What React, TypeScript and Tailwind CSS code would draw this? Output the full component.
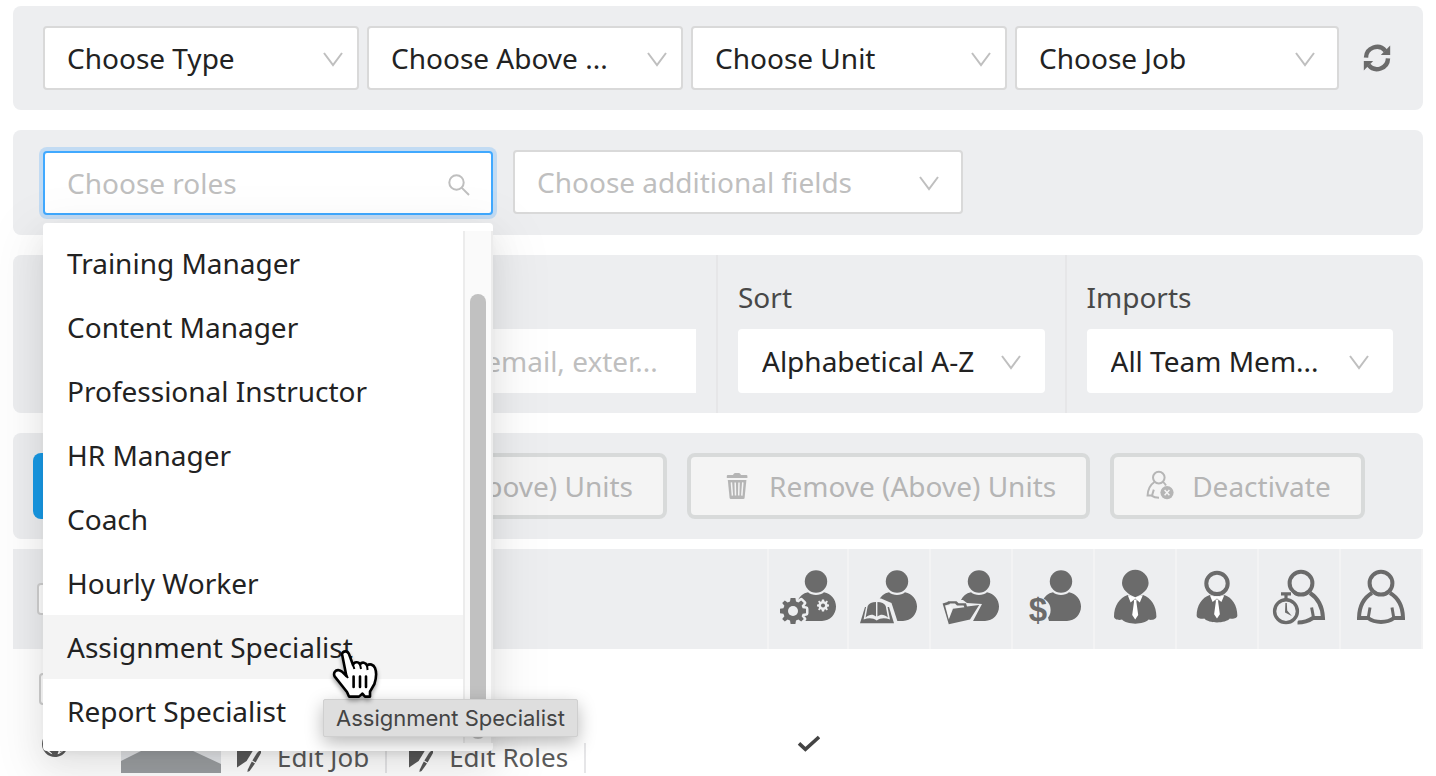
import type { ReactNode } from "react";

const roles = [
  "Training Manager",
  "Content Manager",
  "Professional Instructor",
  "HR Manager",
  "Coach",
  "Hourly Worker",
  "Assignment Specialist",
  "Report Specialist",
];

type SelectProps = {
  label: string;
  value: string;
  id?: string;
  className?: string;
  chevron?: string;
};

const Select = ({
  label,
  value,
  id,
  className = "border-[#d9d9d9] text-[#222]",
  chevron = "right-6",
}: SelectProps) => (
  <div className="relative w-full">
    <select
      id={id}
      aria-label={label}
      className={`block h-16 w-full appearance-none rounded border-2 bg-white pr-12 pl-[22px] ${className}`}
    >
      <option>{value}</option>
    </select>
    <svg
      className={`pointer-events-none absolute top-[25px] h-4 w-5 ${chevron}`}
      viewBox="0 0 20 16"
      fill="none"
      stroke="#bfbfbf"
      strokeWidth="2"
    >
      <path d="M1 2 L10 14 L19 2" />
    </svg>
  </div>
);

/* Icons */

const BG = "#edeef0";
const gearPath =
  "M-2.4 -13 H2.4 L3 -9.4 L5.4 -8.4 L8.2 -10.6 L10.8 -8 L8.6 -5.2 L9.6 -2.8 L13 -2.3 V2.3 L9.6 2.8 L8.6 5.2 L10.8 8 L8.2 10.6 L5.4 8.4 L3 9.4 L2.4 13 H-2.4 L-3 9.4 L-5.4 8.4 L-8.2 10.6 L-10.8 8 L-8.6 5.2 L-9.6 2.8 L-13 2.3 V-2.3 L-9.6 -2.8 L-8.6 -5.2 L-10.8 -8 L-8.2 -10.6 L-5.4 -8.4 L-3 -9.4 Z";

const Icon = ({ children }: { children: ReactNode }) => (
  <svg className="mx-auto block size-[60px]" viewBox="0 0 60 60" fill="#6b6b6b">
    {children}
  </svg>
);

const Bust = () => (
  <>
    <circle cx="38" cy="12.5" r="11.2" />
    <path d="M30 23.3 C34 27 42 27 46 23.3 C53 24.5 58 30.5 58 37.6 C58 45.5 52 52 44 52 H26 L20 31 C22 27 25 24.3 30 23.3 Z" />
  </>
);

const GearsIcon = () => (
  <Icon>
    <Bust />
    <g transform="translate(15 42)">
      <path d={gearPath} stroke={BG} strokeWidth="5" strokeLinejoin="round" fill={BG} />
      <path d={gearPath} />
      <circle r="5" fill={BG} />
    </g>
    <g transform="translate(45 36.5) scale(.46)">
      <path d={gearPath} fill={BG} />
      <circle r="4.4" />
    </g>
  </Icon>
);

const BookIcon = () => (
  <Icon>
    <Bust />
    <path d="M14 29.5 L22 29.5 L32.5 34 L39 54 H24 Z" fill={BG} />
    <path d="M6 38 L1 54.3 H35 L30 38 Z" />
    <path d="M8 33 L4.6 50.6 C9.5 48.4 14 48.8 17.7 51.4 C21.4 48.8 26 48.4 31 50.6 L27.6 33 Z" fill={BG} />
    <path d="M17 33 C13 33 10 34.4 8.7 37 L6.6 48.4 C10.5 45.2 13.6 45 17 47.4 Z" />
    <path d="M18.4 33 C22.4 33 25.4 34.4 26.7 37 L28.9 48.4 C25 45.2 21.9 45 18.4 47.4 Z" />
  </Icon>
);

const FolderIcon = () => (
  <Icon>
    <Bust />
    <path d="M2 31 L22 31 L26 34 L41 35 L31 54 H8 Z" fill={BG} />
    <path d="M1.6 34.4 L6.4 33 L7 32.2 H15.5 L17.6 34.2 L25 34.2 L26 37.6 L38.2 36 L29 50.6 L7.8 55.2 Z" />
    <path d="M4 36.4 L8.4 35.2 L9 34.6 H14 L16 36.6 L22.6 36.6 L23.4 38.2 L12 39.8 L7.8 50.6 Z" fill={BG} />
    <path d="M5 37.4 L9.5 36.4 L11 39.8 L7.8 49 Z" fill="#f7f7f7" />
  </Icon>
);

const DollarIcon = () => (
  <Icon>
    <Bust />
    <circle cx="15" cy="41" r="12.6" fill={BG} />
    <text
      x="15"
      y="52"
      textAnchor="middle"
      fontFamily="Liberation Sans, sans-serif"
      fontWeight="700"
      fontSize="33"
    >
      $
    </text>
  </Icon>
);

const Suit = () => (
  <>
    <path d="M22.6 26 L30 29 L38 26 C46 28.6 51.4 37 51.4 47.5 C51.4 50.6 46.5 51.4 43.6 50.6 C39 56 21.5 56 17 50.6 C13.5 51.4 9 50.6 9 47.5 C9 37 14.6 28.6 22.6 26 Z" />
    <path d="M22.8 26.2 L25.6 33.4 L30.2 29.6 L34.8 33.4 L37.8 26.2 L30.2 28 Z" fill="#fff" />
    <path d="M28.8 30.6 H31.6 L31.4 33 L33.2 46 L30.2 50.6 L27.2 46 L29 33 Z" fill="#fff" />
  </>
);

const SuitIcon = () => (
  <Icon>
    <Suit />
    <path d="M30.3 .8 A13.3 13.3 0 0 1 43.6 14 C43.6 20 38 25.5 30.3 28.2 C22.6 25.5 17 20 17 14 A13.3 13.3 0 0 1 30.3 .8 Z" />
  </Icon>
);

const SuitOutlineIcon = () => (
  <Icon>
    <g transform="translate(1 1) scale(.96)">
      <Suit />
    </g>
    <circle cx="30" cy="14.4" r="10.7" fill={BG} stroke="#6b6b6b" strokeWidth="4" />
  </Icon>
);

const StopwatchIcon = () => (
  <Icon>
    <g fill="none" stroke="#6b6b6b" strokeWidth="4">
      <circle cx="32" cy="14.2" r="11.4" />
      <path d="M41 24 C49.5 29.5 53.5 38 54 49 H44 C38 53 34 53.5 28.5 53.6" />
      <path d="M42.6 38.5 L44.6 49" strokeWidth="3" />
    </g>
    <circle cx="17" cy="42" r="15.4" fill={BG} />
    <path d="M10 21.5 H21 L25 26 L23 31 H10 Z" fill={BG} />
    <circle cx="17" cy="42.2" r="11.4" fill={BG} stroke="#6b6b6b" strokeWidth="3.4" />
    <path d="M12 23.2 H22 V26.6 H18.6 V30 H15.4 V26.6 H12 Z" />
    <path d="M16.4 34 H17.8 L18.2 41.6 L22.8 47 L16 43.4 Z" />
  </Icon>
);

const PersonIcon = () => (
  <Icon>
    <g fill="none" stroke="#6b6b6b" strokeWidth="4">
      <circle cx="30" cy="14.2" r="11.4" />
      <path d="M21 24 C12.5 29 8.2 37 8 49 H17 C24 54.2 36 54.2 43 49 H52 C51.8 37 47.5 29 39 24" />
      <path d="M19 38.5 L17.2 49 M41 38.5 L42.8 49" strokeWidth="3" />
    </g>
  </Icon>
);

const TrashIcon = () => (
  <svg className="h-8 w-8" viewBox="0 0 32 32" fill="#b5b5b5">
    <path d="M12.6 4 Q13 3 14.4 3 H17.6 Q19 3 19.4 4 L20 5 H25.4 Q26.4 5 26.4 6 V8 H5.8 V6 Q5.8 5 6.8 5 H12 Z" />
    <path d="M6.8 10 H25.4 L23.6 28 Q23.4 29 22.4 29 H9.8 Q8.8 29 8.6 28 Z" />
    <path d="M10.4 12.4 L11.4 25.6 M14.2 12.4 L14.5 25.6 M18 12.4 L17.7 25.6 M21.8 12.4 L20.8 25.6" stroke="#f4f4f4" strokeWidth="1.5" />
  </svg>
);

const UserRemoveIcon = () => (
  <svg className="h-8 w-8" viewBox="0 0 32 32" fill="none" stroke="#b5b5b5" strokeWidth="2">
    <circle cx="14.8" cy="7.6" r="5.8" />
    <path d="M10.4 12 C6 15 3.8 19.4 3.6 25.6 H7.6 C9.6 27.2 12 27.8 15 27.8 M19 12 C20.4 13 21.2 14 22 15.4 M9.8 19.6 L8.2 25" />
    <circle cx="23" cy="22.6" r="6.6" fill="#b5b5b5" stroke="none" />
    <path d="M20.6 20 L25.4 25.2 M25.4 20 L20.6 25.2" stroke="#f4f4f4" strokeWidth="1.5" />
  </svg>
);

const EditIcon = () => (
  <svg className="h-7 w-6" viewBox="0 0 24 28" fill="#5a5a5a">
    <path d="M0 3 H18 L14.5 9 L9.6 17 L0 23.4 Z" />
    <path d="M24 5 L20 9 L15.4 16.4 L18.6 18.4 L24 9 Z" />
    <path d="M14.8 17.4 L18 19.4 L12.6 27 L10.4 28 L10.8 25.4 Z" />
  </svg>
);

const PointerIcon = () => (
  <svg className="h-[52px] w-[48px] drop-shadow-[0_3px_2px_rgba(0,0,0,0.35)]" viewBox="0 0 48 52">
    <path
      d="M10 5 C11 1.6 15.4 1.4 17 5 L21 16 C22 12.6 26.6 12.4 28 15.4 C30 12.6 34 13.4 35 16.6 C37.6 14.4 41.6 15.4 43 19 C45 24 44 30 42.4 35 L38 42.6 V47.6 H33 L30.4 44.6 L27 47.6 H17 L15 43 L2.6 27.4 C1 24 3.4 20.6 7 21.2 C10 21.8 12 24.4 14.4 27 Z"
      fill="#fff"
      stroke="#000"
      strokeWidth="2.6"
      strokeLinejoin="round"
    />
    <path d="M14 26 L16 29 M21 16 L22.4 20 M28 15.4 L29 20 M35 16.6 L35.6 21" stroke="#000" strokeWidth="2" />
    <path d="M21.6 27.6 V38 M28 27.6 V38 M34 27.6 V38" stroke="#000" strokeWidth="2.6" strokeLinecap="round" />
  </svg>
);

const columns = [
  { name: "Administrator", icon: <GearsIcon /> },
  { name: "Training Manager", icon: <BookIcon /> },
  { name: "Content Manager", icon: <FolderIcon /> },
  { name: "HR Manager", icon: <DollarIcon /> },
  { name: "Coach", icon: <SuitIcon /> },
  { name: "Assistant", icon: <SuitOutlineIcon /> },
  { name: "Hourly Worker", icon: <StopwatchIcon /> },
  { name: "Member", icon: <PersonIcon /> },
];

const RolesDropdown = () => (
  <div className="absolute top-[72px] left-0 z-10 w-full rounded bg-white py-2 shadow-[0_18px_56px_16px_rgba(0,0,0,0.05),0_12px_32px_0_rgba(0,0,0,0.08),0_6px_12px_-8px_rgba(0,0,0,0.12)]">
    <div className="flex">
      <ul role="listbox" aria-label="Roles" className="flex-1">
        {roles.map((role) => (
          <li
            key={role}
            role="option"
            aria-selected={false}
            className={`h-16 px-6 leading-[64px] whitespace-nowrap text-[#222] ${
              role === "Assignment Specialist" ? "bg-[#f4f4f4]" : ""
            }`}
          >
            {role}
          </li>
        ))}
      </ul>
      {/* Scrollbar */}
      <div className="flex w-[30px] justify-center border-x-2 border-[#ececec] bg-[#fafafa] pt-[63px] pb-1">
        <div className="w-4 rounded-full bg-[#c1c1c1]" />
      </div>
    </div>

    <div className="absolute top-[476px] left-[280px] rounded-xs border border-[#cfcfcf] bg-[#dedede] px-3 font-[Inter,sans-serif] text-[22px] leading-9 whitespace-nowrap text-[#444] shadow-[0_6px_18px_rgba(0,0,0,0.28)]">
      Assignment Specialist
    </div>
    <div className="absolute top-[426px] left-[289px]">
      <PointerIcon />
    </div>
  </div>
);

const actionClass =
  "flex h-[66px] items-center gap-4 rounded-lg border-4 border-[#d8dada] bg-[#f4f4f4] px-[30px] whitespace-nowrap text-[#b5b5b5]";

const checkboxClass = "block size-8 appearance-none rounded border-2 border-[#d0d0d0] bg-white";

const App = () => (
  <div className="h-screen overflow-hidden bg-white px-[13px] pt-1.5 font-['Noto_Sans',sans-serif] text-[28px] leading-9 text-[#484848]">
    {/* Filters */}
    <section className="flex items-center rounded-lg bg-[#edeef0] py-5 pr-8 pl-[30px]">
      <div className="grid flex-1 grid-cols-4">
        <div className="pr-2">
          <Select label="Type" value="Choose Type" chevron="right-4" />
        </div>
        <div className="pr-2">
          <Select label="Above unit" value="Choose Above ..." chevron="right-4" />
        </div>
        <div className="pr-2">
          <Select label="Unit" value="Choose Unit" chevron="right-4" />
        </div>
        <div>
          <Select label="Job" value="Choose Job" />
        </div>
      </div>
      <button aria-label="Refresh" className="ml-6">
        <svg className="size-7" viewBox="0 0 28 28" fill="none" stroke="#6b6b6b" strokeWidth="4.4">
          <path d="M3 13.6 A11 11 0 0 1 22.4 6.8" />
          <path d="M27.2 1.6 V11 H17.8 Z" fill="#6b6b6b" stroke="none" />
          <path d="M25 14.4 A11 11 0 0 1 5.6 21.2" />
          <path d="M.8 26.4 V17 H10.2 Z" fill="#6b6b6b" stroke="none" />
        </svg>
      </button>
    </section>

    {/* Roles and additional fields */}
    <section className="mt-5 flex gap-5 rounded-lg bg-[#edeef0] px-[30px] py-5">
      <div className="relative mt-px w-[450px]">
        <input
          aria-label="Choose roles"
          placeholder="Choose roles"
          className="block h-16 w-full rounded border-2 border-[#40a9ff] bg-white pr-12 pl-[22px] shadow-[0_0_0_4px_rgba(24,144,255,0.2)] outline-none placeholder:text-[#bfbfbf]"
        />
        <svg className="absolute top-[22px] right-[22px] size-6" viewBox="0 0 24 24" fill="none" stroke="#bfbfbf" strokeWidth="2">
          <circle cx="9.5" cy="9.5" r="7.2" />
          <path d="M14.6 14.6 L22 22" />
        </svg>
        <RolesDropdown />
      </div>
      <div className="w-[450px]">
        <Select label="Additional fields" value="Choose additional fields" className="border-[#d9d9d9] text-[#bfbfbf]" />
      </div>
    </section>

    {/* Search and sort */}
    <section className="mt-5 flex rounded-lg bg-[#edeef0] px-2.5">
      <div className="flex-1 px-5 pt-[74px] pb-5">
        <Select label="Status" value="" className="border-white" />
      </div>
      <div className="flex-1 border-r-2 border-[#e6e6e8] px-5 pt-[74px] pb-5">
        <input
          aria-label="Search"
          placeholder="Name, email, exter..."
          className="block h-16 w-full bg-white px-0.5 placeholder:text-[#bfbfbf]"
        />
      </div>
      <div className="flex-1 border-r-2 border-[#e6e6e8] px-5 pt-5 pb-5">
        <label htmlFor="sort" className="mb-2.5 block leading-[44px]">
          Sort
        </label>
        <Select id="sort" label="Sort" value="Alphabetical A-Z" className="border-white text-[#222]" />
      </div>
      <div className="flex-1 px-5 pt-5 pb-5">
        <label htmlFor="imports" className="mb-2.5 block leading-[44px]">
          Imports
        </label>
        <Select id="imports" label="Imports" value="All Team Mem..." className="border-white text-[#222]" />
      </div>
    </section>

    {/* Actions */}
    <section className="mt-5 flex gap-5 rounded-lg bg-[#edeef0] p-5">
      <button aria-label="Add" className="h-[66px] w-[254px] rounded-lg bg-[#189ae6]" />
      <button className={`${actionClass} w-[360px] justify-end`}>Add (Above) Units</button>
      <button className={actionClass}>
        <TrashIcon />
        Remove (Above) Units
      </button>
      <button className={actionClass}>
        <UserRemoveIcon />
        Deactivate
      </button>
    </section>

    {/* Members */}
    <table className="mt-2.5 w-full table-fixed border-separate border-spacing-0">
      <thead>
        <tr className="h-[100px] bg-[#edeef0]">
          <th className="pl-6 text-left">
            <input type="checkbox" aria-label="Select all" className={checkboxClass} />
          </th>
          {columns.map((column) => (
            <th key={column.name} aria-label={column.name} className="w-[82px] border-r-2 border-[#f3f3f4] p-0 nth-2:border-l-2">
              {column.icon}
            </th>
          ))}
        </tr>
      </thead>
      <tbody>
        <tr className="h-[190px]">
          <td className="pt-6 pl-[26px] align-top">
            <div className="flex">
              <div className="flex w-8 flex-col items-center gap-[26px]">
                <input type="checkbox" aria-label="Select member" className={checkboxClass} />
                <svg className="size-[26px]" viewBox="0 0 26 26" fill="none" stroke="#5a5a5a" strokeWidth="2.4">
                  <circle cx="13" cy="13" r="11.8" />
                  <path d="M4 17 L10 20 L12 24 M12 18 H16 L14 24 Z M22 17 L18 20" fill="#5a5a5a" />
                </svg>
              </div>
              <svg className="ml-[50px] h-[100px] w-[100px]" viewBox="0 0 100 100">
                <rect width="100" height="100" fill="#e3e5e8" />
                <path d="M0 88 L22 77 H70 L100 91 V100 H0 Z" fill="#9b9ea1" />
              </svg>
              <div className="flex items-end text-[26px] leading-[30px] whitespace-nowrap">
                <a href="#job" className="flex items-center gap-4 border-r-2 border-[#e6e6e8] px-4 pb-px leading-[29px] text-[#5a5a5a]">
                  <EditIcon />
                  Edit Job
                </a>
                <a href="#roles" className="flex items-center gap-4 border-r-2 border-[#e6e6e8] pr-4 pl-[22px] pb-px leading-[29px] text-[#5a5a5a]">
                  <EditIcon />
                  Edit Roles
                </a>
              </div>
            </div>
          </td>
          <td className="p-0">
            <svg className="mx-auto h-[18px] w-6" viewBox="0 0 24 18" fill="none" stroke="#444" strokeWidth="3.6">
              <path d="M3 8.4 L9.4 14.4 L23 2" />
            </svg>
          </td>
          <td colSpan={7} />
        </tr>
      </tbody>
    </table>
  </div>
);

export default App;
